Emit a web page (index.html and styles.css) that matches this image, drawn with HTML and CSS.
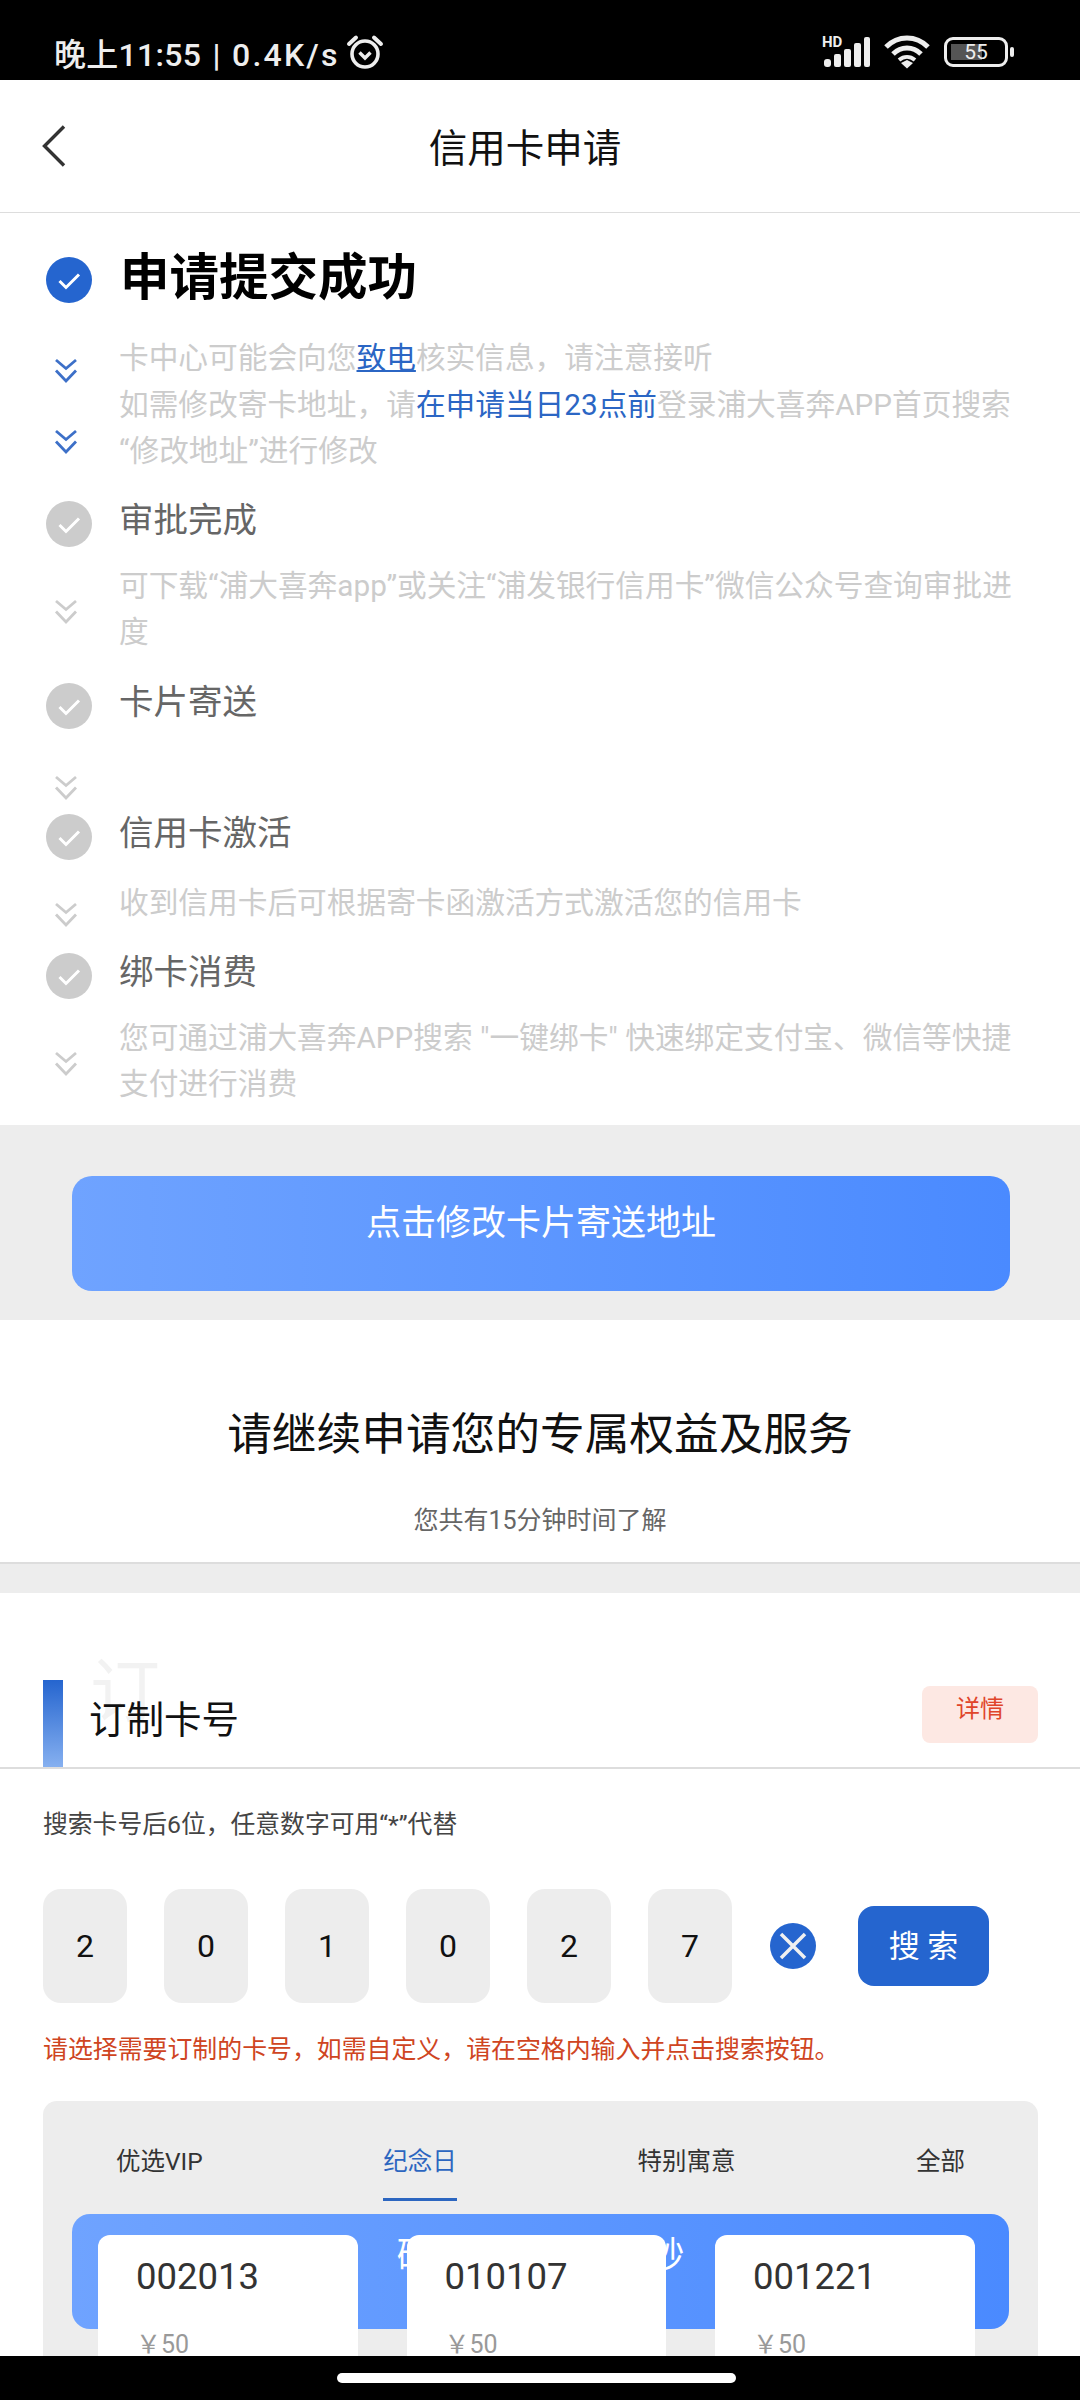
FILE: index.html
```html
<!DOCTYPE html>
<html lang="zh-CN">
<head>
    <meta charset="UTF-8">
    <meta name="viewport" content="width=device-width, initial-scale=1.0">
    <title>信用卡申请</title>
    <link rel="stylesheet" href="styles.css">
</head>
<body>
    <svg class="icon-defs" width="0" height="0">
        <symbol id="chevrons" viewBox="0 0 24 26">
            <polyline points="2,2 12,10.500 22,2" fill="none" stroke="currentColor" stroke-width="2.800"/>
            <polyline points="2,12.500 12,23 22,12.500" fill="none" stroke="currentColor" stroke-width="2.800"/>
        </symbol>
        <symbol id="check" viewBox="0 0 46 46">
            <circle cx="23" cy="23" r="23" fill="currentColor"/>
            <polyline points="13.500,24 20,30.500 33,17.500" fill="none" stroke="#fff" stroke-width="3"/>
        </symbol>
    </svg>

    <!-- Status bar -->
    <div class="status-bar">
        <div class="status-left">
            <span class="status-text">晚上11:55 | <span class="net-speed">0.4K/s</span></span>
            <svg class="alarm" width="38" height="38" viewBox="0 0 38 38">
                <circle cx="19" cy="21" r="13" fill="none" stroke="#eee" stroke-width="3.600"/>
                <polyline points="13.500,19.500 19,25 24.500,19.500" fill="none" stroke="#eee" stroke-width="3.400"/>
                <path d="M3 11 L10 4.500 M35 11 L28 4.500" stroke="#eee" stroke-width="4" stroke-linecap="round"/>
            </svg>
        </div>
        <div class="status-right">
            <svg width="50" height="36" viewBox="0 0 50 36">
                <text x="2" y="13" class="hd">HD</text>
                <rect x="4" y="25" width="7" height="8" rx="3" fill="#eee"/>
                <rect x="14" y="20" width="7" height="13" rx="2" fill="#eee"/>
                <rect x="24" y="15" width="7" height="18" rx="2" fill="#eee"/>
                <rect x="34" y="9" width="7" height="24" rx="2" fill="#eee"/>
                <rect x="44" y="3" width="6" height="30" rx="2" fill="#eee"/>
            </svg>
            <svg width="46" height="34" viewBox="0 0 46 34">
                <path d="M2 12 C14 0 32 0 44 12 M9 19 C17 11 29 11 37 19" fill="none" stroke="#eee" stroke-width="5"/>
                <path d="M15 25 C20 21 26 21 31 25" fill="none" stroke="#eee" stroke-width="4"/>
                <path d="M17 28 L23 25 L29 28 L23 33.500 Z" fill="#eee"/>
            </svg>
            <div class="battery">
                <div class="battery-body"><span class="battery-level">55</span></div>
                <div class="battery-tip"></div>
            </div>
        </div>
    </div>

    <div class="screen">
        <!-- Title bar -->
        <div class="nav">
            <svg class="back" width="24" height="42" viewBox="0 0 24 42">
                <polyline points="22,1.500 2.500,21 22,40.500" fill="none" stroke="#333" stroke-width="3.400"/>
            </svg>
            <div class="nav-title">信用卡申请</div>
        </div>

        <!-- Progress -->
        <div class="steps">
            <div class="step step-current">
                <div class="step-head">
                    <svg class="step-icon"><use href="#check"/></svg>
                    <h2 class="step-name">申请提交成功</h2>
                </div>
                <div class="step-body">
                    <div class="chev-col">
                        <svg class="chev"><use href="#chevrons"/></svg>
                        <svg class="chev"><use href="#chevrons"/></svg>
                    </div>
                    <p class="step-text">卡中心可能会向您<a class="phone-link">致电</a>核实信息，请注意接听<br>如需修改寄卡地址，请<span class="blue-text">在申请当日23点前</span>登录浦大喜奔APP首页搜索“修改地址”进行修改</p>
                </div>
            </div>
            <div class="step">
                <div class="step-head">
                    <svg class="step-icon"><use href="#check"/></svg>
                    <div class="step-name">审批完成</div>
                </div>
                <div class="step-body">
                    <div class="chev-col"><svg class="chev"><use href="#chevrons"/></svg></div>
                    <p class="step-text">可下载“浦大喜奔app”或关注“浦发银行信用卡”微信公众号查询审批进度</p>
                </div>
            </div>
            <div class="step step-empty">
                <div class="step-head">
                    <svg class="step-icon"><use href="#check"/></svg>
                    <div class="step-name">卡片寄送</div>
                </div>
                <div class="step-body">
                    <div class="chev-col"><svg class="chev"><use href="#chevrons"/></svg></div>
                </div>
            </div>
            <div class="step step-short">
                <div class="step-head">
                    <svg class="step-icon"><use href="#check"/></svg>
                    <div class="step-name">信用卡激活</div>
                </div>
                <div class="step-body">
                    <div class="chev-col"><svg class="chev"><use href="#chevrons"/></svg></div>
                    <p class="step-text">收到信用卡后可根据寄卡函激活方式激活您的信用卡</p>
                </div>
            </div>
            <div class="step">
                <div class="step-head">
                    <svg class="step-icon"><use href="#check"/></svg>
                    <div class="step-name">绑卡消费</div>
                </div>
                <div class="step-body">
                    <div class="chev-col"><svg class="chev"><use href="#chevrons"/></svg></div>
                    <p class="step-text">您可通过浦大喜奔APP搜索 "一键绑卡" 快速绑定支付宝、微信等快捷支付进行消费</p>
                </div>
            </div>
        </div>

        <div class="address-band">
            <button class="address-button">点击修改卡片寄送地址</button>
        </div>

        <div class="intro">
            <div class="intro-title">请继续申请您的专属权益及服务</div>
            <div class="intro-sub">您共有15分钟时间了解</div>
        </div>

        <!-- Custom card number -->
        <div class="section">
            <div class="section-head">
                <div class="section-bar"></div>
                <div class="section-title">订制卡号</div>
                <span class="section-ghost">订</span>
                <a class="detail-button">详情</a>
            </div>
            <div class="search-hint">搜索卡号后6位，任意数字可用“*”代替</div>
            <div class="search-row">
                <div class="digit">2</div>
                <div class="digit">0</div>
                <div class="digit">1</div>
                <div class="digit">0</div>
                <div class="digit">2</div>
                <div class="digit">7</div>
                <svg class="clear" width="46" height="46" viewBox="0 0 46 46">
                    <circle cx="23" cy="23" r="23" fill="#2565cf"/>
                    <path d="M11 11 L35 35 M35 11 L11 35" stroke="#f0f0f0" stroke-width="3.500"/>
                </svg>
                <button class="search-button">搜 索</button>
            </div>
            <div class="search-warn">请选择需要订制的卡号，如需自定义，请在空格内输入并点击搜索按钮。</div>

            <div class="panel">
                <div class="tabs">
                    <div class="tab">优选VIP</div>
                    <div class="tab tab-active">纪念日</div>
                    <div class="tab">特别寓意</div>
                    <div class="tab">全部</div>
                </div>
                <div class="banner">确定专属靓号真妙</div>
                <div class="cards">
                    <div class="card">
                        <div class="card-no">002013</div>
                        <div class="card-price">￥50</div>
                    </div>
                    <div class="card">
                        <div class="card-no">010107</div>
                        <div class="card-price">￥50</div>
                    </div>
                    <div class="card">
                        <div class="card-no">001221</div>
                        <div class="card-price">￥50</div>
                    </div>
                </div>
            </div>
        </div>
    </div>

    <div class="home-bar"><div class="home-pill"></div></div>
</body>
</html>
```

FILE: styles.css
```css
html, body {
    margin: 0;
    padding: 0;
}
body {
    width: 1080px;
    height: 2400px;
    display: flex;
    flex-direction: column;
    overflow: hidden;
    font-family: 'Roboto', 'Noto Sans CJK SC', sans-serif;
    background-color: #fff;
    color: #333;
}
.icon-defs {
    position: absolute;
}
p, h2 {
    margin: 0;
}

/* status bar */
.status-bar {
    height: 80px;
    flex: none;
    display: flex;
    justify-content: space-between;
    align-items: center;
    background: #000;
    color: #eee;
    padding: 24px 66px 0 54px;
    box-sizing: border-box;
}
.status-left {
    display: flex;
    align-items: center;
    gap: 6px;
}
.status-text {
    font-size: 32px;
    font-weight: 500;
    word-spacing: 3px;
    letter-spacing: 0.300px;
}
.net-speed {
    letter-spacing: 2.200px;
}
.status-right {
    display: flex;
    align-items: center;
    gap: 14px;
}
.hd {
    font-size: 15px;
    font-weight: 700;
    fill: #eee;
}
.battery {
    display: flex;
    align-items: center;
    gap: 2px;
}
.battery-body {
    width: 64px;
    height: 30px;
    border: 3px solid #eee;
    border-radius: 9px;
    box-sizing: border-box;
    display: flex;
    align-items: center;
    justify-content: center;
    background: linear-gradient(#555, #555) no-repeat 4px 4px / 31px 16px;
}
.battery-level {
    font-size: 21px;
    color: #eee;
}
.battery-tip {
    width: 4px;
    height: 10px;
    border-radius: 2px;
    background: #eee;
}

/* content */
.screen {
    flex: 1;
    overflow: hidden;
}
.nav {
    height: 133px;
    display: flex;
    align-items: center;
    box-sizing: border-box;
    padding: 0 96px 0 42px;
    border-bottom: 1px solid #ddd;
}
.nav-title {
    flex: 1;
    text-align: center;
    font-size: 38.500px;
    color: #111;
    margin-bottom: 2px;
}
.steps {
    padding: 37px 66px 17px 46px;
}
.step {
    margin-bottom: 25px;
}
.step:last-child {
    margin-bottom: 0;
}
.step-head {
    display: flex;
    align-items: center;
    height: 50px;
    gap: 27px;
    color: #ccc;
}
.step-icon {
    width: 46px;
    height: 46px;
    flex: none;
}
.step-name {
    font-size: 34.500px;
    font-weight: 400;
    color: #666;
    margin-top: -13px;
}
.step-current {
    margin-bottom: 24px;
}
.step-current .step-head {
    height: 60px;
    color: #2565cf;
}
.step-current .step-name {
    font-size: 49.500px;
    font-weight: 700;
    color: #000;
    margin-left: 1px;
}
.step-body {
    display: flex;
    margin-top: 14px;
    color: #ccc;
}
.step-current .step-body {
    margin-top: 25px;
    color: #3d70c8;
}
.step-empty {
    margin-bottom: 0;
}
.step-empty .step-body {
    height: 67px;
}
.step-short {
    margin-bottom: 23px;
}
.step-short .step-body {
    margin-top: 18px;
}
.chev-col {
    width: 73px;
    flex: none;
    display: flex;
    flex-direction: column;
    justify-content: center;
    padding-top: 6px;
    box-sizing: border-box;
}
.step-current .chev-col {
    justify-content: flex-start;
    gap: 45px;
    padding-top: 23px;
}
.step-empty .chev-col {
    justify-content: flex-end;
    padding-bottom: 11px;
}
.step-short .chev-col {
    padding-top: 22px;
}
.chev {
    width: 24px;
    height: 26px;
    margin-left: 8px;
    display: block;
}
.step-text {
    font-size: 29.700px;
    line-height: 46.500px;
    color: #ccc;
}
.phone-link {
    color: #2b66c4;
    text-decoration: underline;
}
.blue-text {
    color: #2b66c4;
}

.address-band {
    background: #ededed;
    padding: 51px 70px 29px 72px;
}
.address-button {
    display: block;
    width: 100%;
    height: 115px;
    padding-bottom: 28px;
    border: none;
    border-radius: 20px;
    background: linear-gradient(90deg, #6fa3ff, #4a8aff);
    color: #fff;
    font-family: inherit;
    font-size: 35px;
}

.intro {
    height: 244px;
    box-sizing: border-box;
    padding-top: 83px;
    text-align: center;
    border-bottom: 2px solid #ddd;
}
.intro-title {
    font-size: 44.700px;
    line-height: 64px;
    color: #111;
}
.intro-sub {
    margin-top: 36px;
    font-size: 25px;
    line-height: 36px;
    color: #666;
}

.section {
    border-top: 29px solid #ededed;
}
.section-head {
    position: relative;
    display: flex;
    margin-top: 87px;
    height: 87px;
    padding: 0 42px 0 43px;
    border-bottom: 2px solid #ddd;
}
.section-bar {
    width: 20px;
    background: linear-gradient(#2565cf, #86b0f0);
}
.section-title {
    position: relative;
    z-index: 1;
    margin-left: 26px;
    font-size: 37.500px;
    line-height: 80px;
    color: #111;
}
.section-ghost {
    position: absolute;
    left: 90px;
    top: -44px;
    font-size: 70px;
    color: #f2f2f2;
}
.detail-button {
    margin-left: auto;
    margin-top: 6px;
    width: 116px;
    height: 57px;
    border-radius: 8px;
    background: #fde8e3;
    color: #e0452a;
    font-size: 24px;
    line-height: 46px;
    text-align: center;
}
.search-hint {
    margin: 38px 0 0 43px;
    font-size: 24.800px;
    line-height: 36px;
    color: #444;
}
.search-row {
    display: flex;
    align-items: center;
    margin: 46px 0 0 43px;
}
.digit {
    width: 84px;
    height: 114px;
    margin-right: 37px;
    border-radius: 18px;
    background: #ededed;
    color: #111;
    font-size: 32px;
    line-height: 114px;
    text-align: center;
}
.clear {
    flex: none;
    margin-left: 1px;
}
.search-button {
    width: 131px;
    height: 80px;
    margin-left: 42px;
    padding-bottom: 6px;
    border: none;
    border-radius: 16px;
    background: #2565cf;
    color: #fff;
    font-family: inherit;
    font-size: 31px;
}
.search-warn {
    margin: 29px 0 0 43px;
    font-size: 24.900px;
    line-height: 36px;
    color: #cf4522;
}

.panel {
    margin: 33px 42px 0 43px;
    padding: 41px 29px 0;
    border-radius: 14px;
    background: #ededed;
    height: 260px;
}
.tabs {
    display: flex;
    justify-content: space-between;
    padding: 0 44px;
    margin-bottom: 13px;
}
.tab {
    font-size: 24.500px;
    line-height: 40px;
    padding-bottom: 16px;
    border-bottom: 3px solid transparent;
    color: #333;
}
.tab-active {
    color: #2c66c0;
    border-bottom-color: #2c66c0;
}
.banner {
    height: 115px;
    border-radius: 18px;
    background: linear-gradient(90deg, #6fa3ff, #4a8aff);
    color: #fff;
    font-size: 36px;
    line-height: 84px;
    text-align: center;
}
.cards {
    position: relative;
    display: flex;
    gap: 49px;
    margin: -94px 26px 0;
}
.card {
    width: 259.500px;
    height: 220px;
    box-sizing: border-box;
    padding: 19px 0 0 38px;
    border-radius: 12px 12px 0 0;
    background: #fff;
}
.card-no {
    font-size: 36.500px;
    line-height: 46px;
    color: #333;
}
.card-price {
    margin-top: 25px;
    font-size: 25px;
    line-height: 40px;
    color: #999;
}

.home-bar {
    height: 44px;
    flex: none;
    background: #000;
    display: flex;
    justify-content: center;
    padding-top: 17px;
    box-sizing: border-box;
}
.home-pill {
    width: 399px;
    height: 10px;
    border-radius: 5px;
    background: #fff;
    margin-right: 7px;
}
```
